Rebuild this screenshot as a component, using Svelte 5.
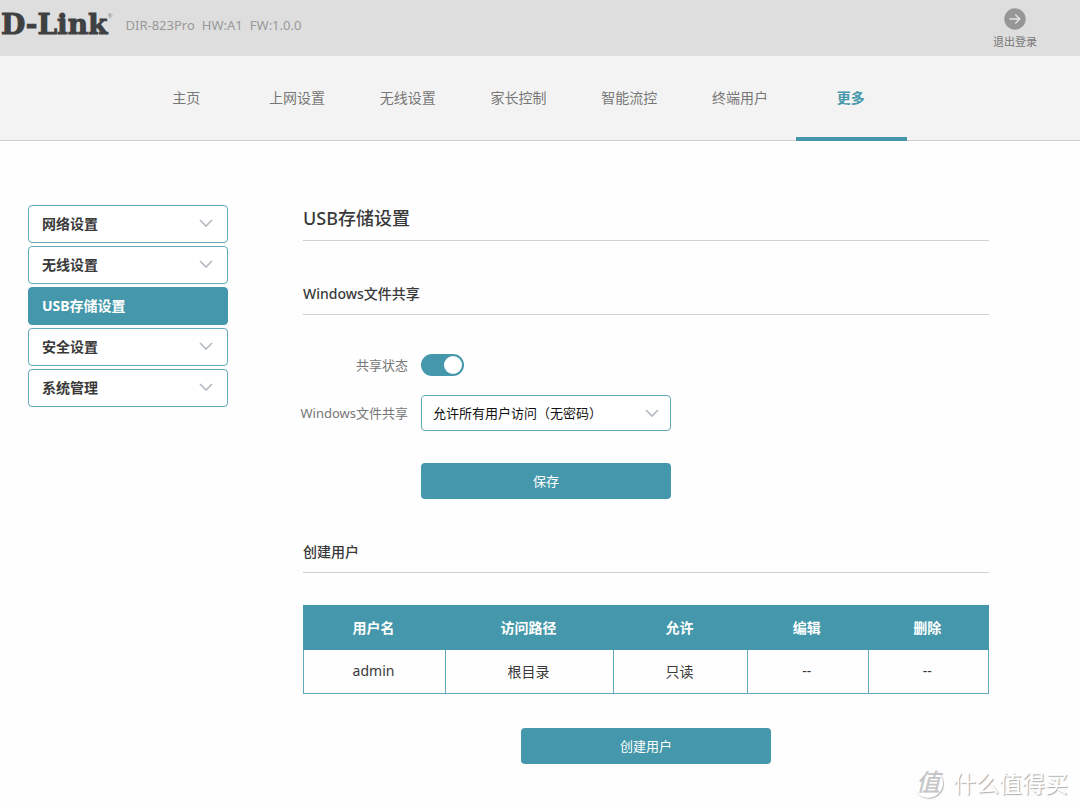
<script>
  const tabs = ['主页', '上网设置', '无线设置', '家长控制', '智能流控', '终端用户', '更多'];
  const activeTab = '更多';

  const menu = ['网络设置', '无线设置', 'USB存储设置', '安全设置', '系统管理'];
  const activeMenu = 'USB存储设置';

  const columns = ['用户名', '访问路径', '允许', '编辑', '删除'];
  const users = [['admin', '根目录', '只读', '--', '--']];

  let shared = $state(true);
  let access = $state('all');
</script>

{#snippet chevron()}
  <svg class="chevron" viewBox="0 0 14 8" width="14" height="8" aria-hidden="true">
    <path d="M1 1 L7 7 L13 1" fill="none" stroke="#b4bac2" stroke-width="1.7" />
  </svg>
{/snippet}

<div class="page">
  <header class="top">
    <div class="brand">
      <span class="logo">D-Link<sup>®</sup></span>
      <span class="version"><span>DIR-823Pro</span><span>HW:A1</span><span>FW:1.0.0</span></span>
    </div>
    <button class="logout" type="button">
      <svg viewBox="0 0 22 22" width="22" height="22" aria-hidden="true">
        <circle cx="11" cy="11" r="10.7" fill="#969696" />
        <path d="M5.5 11 H15.5 M11.3 6.5 L15.8 11 L11.3 15.5" fill="none" stroke="#e4e4e4" stroke-width="1.4" />
      </svg>
      <span>退出登录</span>
    </button>
  </header>

  <nav class="tabs">
    {#each tabs as tab}
      <a href="#top" class:active={tab === activeTab}>{tab}</a>
    {/each}
  </nav>

  <div class="body">
    <aside class="menu">
      {#each menu as item}
        <button type="button" class:active={item === activeMenu}>
          <span>{item}</span>
          {#if item !== activeMenu}{@render chevron()}{/if}
        </button>
      {/each}
    </aside>

    <main class="content">
      <h1>USB存储设置</h1>

      <h2>Windows文件共享</h2>
      <form class="form" onsubmit={(e) => e.preventDefault()}>
        <label for="share">共享状态</label>
        <input id="share" class="switch" type="checkbox" bind:checked={shared} />
        <label for="access">Windows文件共享</label>
        <div class="select">
          <select id="access" bind:value={access}>
            <option value="all">允许所有用户访问（无密码）</option>
            <option value="password">需要密码访问</option>
          </select>
          {@render chevron()}
        </div>
        <button class="primary save" type="submit">保存</button>
      </form>

      <h2>创建用户</h2>
      <table>
        <colgroup>
          <col class="c-name" /><col class="c-path" /><col class="c-allow" /><col /><col />
        </colgroup>
        <thead>
          <tr>{#each columns as column}<th scope="col">{column}</th>{/each}</tr>
        </thead>
        <tbody>
          {#each users as user}
            <tr>{#each user as cell}<td>{cell}</td>{/each}</tr>
          {/each}
        </tbody>
      </table>
      <button class="primary create" type="button">创建用户</button>
    </main>
  </div>

  <div class="watermark">
    <span class="seal">值</span>
    <span>什么值得买</span>
  </div>
</div>

<style>
  :global(body) {
    margin: 0;
    background: #fefefe;
  }

  .page {
    --teal: #4598ab;
    position: relative;
    min-height: 100vh;
    box-sizing: border-box;
    color: #393939;
    font-family: 'Noto Sans', 'Noto Sans CJK SC', sans-serif;
    font-size: 14px;
  }

  .page :global(*) {
    box-sizing: border-box;
  }

  button,
  select {
    font: inherit;
    cursor: pointer;
  }

  .top {
    display: flex;
    justify-content: space-between;
    height: 56px;
    padding: 0 43px 0 1px;
    background: #dedede;
  }

  .brand {
    display: flex;
    align-items: center;
    gap: 13px;
    height: 50px;
  }

  .logo {
    display: flex;
    color: #3f4042;
    font: bold 28px/32px 'DejaVu Serif', serif;
    -webkit-text-stroke: 1px #3f4042;
  }

  .logo sup {
    color: #8a8a8a;
    font: 6px/14px 'Noto Sans', sans-serif;
    -webkit-text-stroke: 0;
  }

  .version {
    display: flex;
    gap: 7px;
    color: #999;
    font-size: 13px;
  }

  .logout {
    display: flex;
    flex-direction: column;
    align-items: center;
    gap: 4px;
    padding: 8px 0 0;
    border: 0;
    background: none;
    color: #777;
    font-size: 11px;
    line-height: 16px;
  }

  .tabs {
    display: grid;
    grid-template-columns: repeat(7, 1fr);
    height: 85px;
    padding: 0 16% 0 132px;
    border-bottom: 1px solid #d0d0d0;
    background: #f3f3f3;
  }

  .tabs a {
    height: 85px;
    padding-right: 2px;
    color: #777;
    line-height: 84px;
    text-align: center;
    text-decoration: none;
  }

  .tabs a.active {
    border-bottom: 4px solid var(--teal);
    color: var(--teal);
    font-weight: bold;
  }

  .body {
    display: flex;
    gap: 75px;
    padding: 64px 91px 40px 28px;
  }

  .menu {
    display: flex;
    flex: 0 0 200px;
    flex-direction: column;
    gap: 3px;
  }

  .menu button {
    display: flex;
    align-items: center;
    justify-content: space-between;
    height: 38px;
    padding: 0 14px 2px 13px;
    border: 1px solid #62aab9;
    border-radius: 4px;
    background: #fff;
    color: #393939;
    font-weight: bold;
  }

  .menu button.active {
    border-color: var(--teal);
    background: var(--teal);
    color: #fff;
  }

  .content {
    flex: 1;
    min-width: 0;
  }

  h1,
  h2 {
    margin: 0;
    border-bottom: 1px solid #d0d0d0;
    font-weight: 500;
  }

  h1 {
    padding-bottom: 9px;
    font-size: 18px;
    line-height: 26px;
  }

  h2 {
    margin-top: 42px;
    padding-bottom: 9px;
    font-size: 14px;
    line-height: 22px;
  }

  .form {
    display: grid;
    grid-template-columns: 105px 250px;
    column-gap: 13px;
    row-gap: 19px;
    align-items: center;
    margin-top: 39px;
  }

  .form label {
    justify-self: end;
    color: #777;
    font-size: 13px;
    line-height: 22px;
    white-space: nowrap;
  }

  .switch {
    appearance: none;
    display: flex;
    width: 43px;
    height: 22px;
    margin: 0;
    padding: 2px;
    border-radius: 11px;
    background: #c8c8c8;
    cursor: pointer;
  }

  .switch::before {
    width: 18px;
    height: 18px;
    border-radius: 50%;
    background: #fff;
    content: '';
  }

  .switch:checked {
    justify-content: flex-end;
    background: var(--teal);
  }

  .select {
    display: grid;
    align-items: center;
  }

  .select > :global(*) {
    grid-area: 1 / 1;
  }

  .select select {
    appearance: none;
    width: 100%;
    height: 36px;
    padding: 0 36px 0 11px;
    border: 1px solid #62aab9;
    border-radius: 4px;
    background: #fff;
    color: #111;
    font-size: 13px;
  }

  .select .chevron {
    justify-self: end;
    margin-right: 12px;
    pointer-events: none;
  }

  .primary {
    height: 36px;
    padding: 0 0 2px;
    border: 0;
    border-radius: 4px;
    background: var(--teal);
    color: #fff;
    font-size: 13px;
  }

  .save {
    grid-column: 2;
    margin-top: 13px;
  }

  .create {
    display: block;
    width: 250px;
    margin: 34px auto 0;
  }

  table {
    width: 100%;
    margin-top: 32px;
    border-collapse: collapse;
    table-layout: fixed;
    text-align: center;
  }

  .c-name {
    width: 142px;
  }

  .c-path {
    width: 168px;
  }

  .c-allow {
    width: 134px;
  }

  th,
  td {
    height: 44px;
    padding: 0 2px 2px 0;
    border: 1px solid #62aab9;
  }

  th {
    border-color: var(--teal);
    background: var(--teal);
    color: #fff;
  }

  .watermark {
    position: absolute;
    right: 12px;
    bottom: 9px;
    display: flex;
    align-items: center;
    gap: 10px;
    color: #fff;
    font-size: 23px;
    line-height: 34px;
    text-shadow: 1px 1px 1px #aaa;
    pointer-events: none;
  }

  .seal {
    width: 30px;
    height: 30px;
    border-radius: 50%;
    box-shadow: 1px 1px 1px #bbb;
    color: #c6c6c6;
    font-size: 24px;
    font-style: italic;
    font-weight: 500;
    line-height: 28px;
    text-align: center;
    text-shadow: none;
  }
</style>
